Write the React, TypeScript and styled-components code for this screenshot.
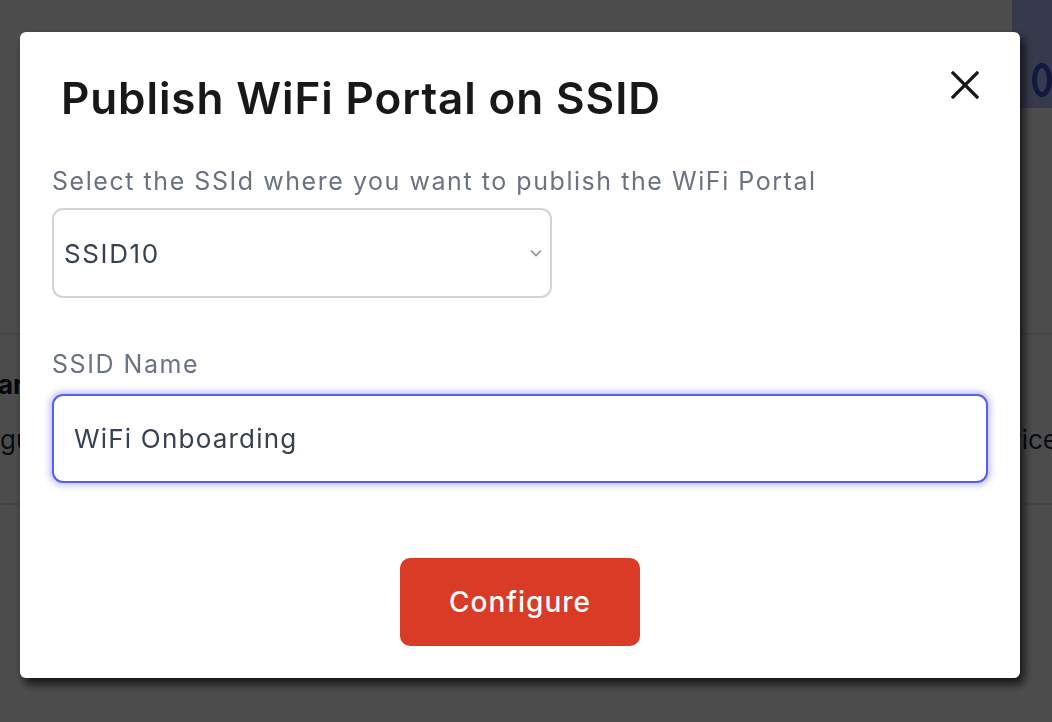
import * as React from "react";
import styled, { createGlobalStyle } from "styled-components";

const GlobalStyle = createGlobalStyle`
    html, body {
        margin: 0;
        padding: 0;
        background: #ffffff;
        overflow: hidden;
    }
    body {
        font-family: Inter, "Noto Sans", "Liberation Sans", sans-serif;
        width: 1052px;
        height: 722px;
    }
`

// page that sits behind the dialog
const Page = styled.div`
    width: 1052px;
    height: 722px;
    display: flex;
    flex-direction: column;
    overflow: hidden;
`

const TopBar = styled.div`
    height: 108px;
    display: flex;
    justify-content: flex-end;
`

const PromoCard = styled.div`
    width: 40px;
    background: #b4c2ff;
    display: flex;
    align-items: flex-end;
    padding-bottom: 11px;
    box-sizing: border-box;
`

const PromoLogo = styled.div`
    width: 34px;
    height: 34px;
    margin-left: 20px;
    border-radius: 50%;
    border: 5px solid #3a55d0;
    box-sizing: border-box;
`

const ListArea = styled.div`
    margin-top: 225px;
    border-top: 2px solid #e5e7eb;
    border-bottom: 2px solid #e5e7eb;
    height: 172px;
    padding-top: 34px;
    box-sizing: border-box;
`

const RowTitle = styled.div`
    font-size: 26px;
    font-weight: 700;
    color: #111827;
    margin-left: -2px;
`

const RowDesc = styled.div`
    display: flex;
    justify-content: space-between;
    font-size: 26px;
    color: #1f2937;
    margin-top: 24px;
    margin-right: -6px;
`

const Overlay = styled.div`
    position: fixed;
    inset: 0;
    background: rgba(0, 0, 0, 0.7);
    padding: 32px 0 0 20px;
    box-sizing: border-box;
`

const Modal = styled.div`
    width: 1000px;
    height: 646px;
    background: #ffffff;
    border-radius: 6px;
    box-shadow: 4px 6px 10px rgba(0, 0, 0, 0.75);
    padding: 40px 32px 32px 32px;
    box-sizing: border-box;
    display: flex;
    flex-direction: column;
`

const Header = styled.div`
    display: flex;
    justify-content: space-between;
    align-items: flex-start;
`

const Title = styled.h2`
    margin: 0 0 0 9px;
    font-size: 44px;
    font-weight: 600;
    line-height: 53px;
    letter-spacing: 0.9px;
    color: #18181b;
`

const CloseButton = styled.button`
    border: none;
    background: none;
    padding: 0;
    margin: -2px 8px 0 0;
    width: 30px;
    height: 30px;
    display: flex;
    align-items: center;
    justify-content: center;
    cursor: pointer;
`

const Field = styled.div<{ $top: number }>`
    margin-top: ${p => p.$top}px;
    display: flex;
    flex-direction: column;
`

const Label = styled.label<{ $gap: number }>`
    font-size: 25px;
    line-height: 29px;
    letter-spacing: 1.55px;
    color: #6b7280;
    margin-bottom: ${p => p.$gap}px;
`

const SelectWrap = styled.div`
    position: relative;
    width: 500px;
`

const Select = styled.select`
    appearance: none;
    width: 100%;
    height: 90px;
    border: 2px solid #d1d5db;
    border-radius: 11px;
    padding: 0 0 0 10px;
    font-family: inherit;
    font-size: 26px;
    letter-spacing: 1.6px;
    color: #374151;
    background: #ffffff;
    outline: none;
`

const Chevron = styled.svg`
    position: absolute;
    right: 9px;
    top: 40px;
    pointer-events: none;
`

const TextInput = styled.input`
    width: 100%;
    height: 89px;
    box-sizing: border-box;
    border: 2px solid #5b5cf6;
    border-radius: 11px;
    padding: 0 20px;
    font-family: inherit;
    font-size: 26px;
    letter-spacing: 1.2px;
    color: #374151;
    outline: none;
    box-shadow: 0 0 7px 2px rgba(99, 102, 241, 0.45);
`

const Footer = styled.div`
    margin-top: auto;
    display: flex;
    justify-content: center;
`

const PrimaryButton = styled.button`
    width: 240px;
    height: 88px;
    border: none;
    border-radius: 10px;
    background: #da3b26;
    color: #ffffff;
    font-family: inherit;
    font-size: 28px;
    font-weight: 500;
    letter-spacing: 1px;
    cursor: pointer;
`

function PublishDialog() {
    const [ssid, setSsid] = React.useState<string>("SSID10")
    const [ssidName, setSsidName] = React.useState<string>("WiFi Onboarding")
    return (
        <Modal>
            <Header>
                <Title>Publish WiFi Portal on SSID</Title>
                <CloseButton aria-label="Close">
                    <svg width="28" height="28" viewBox="0 0 28 28">
                        <path d="M2 2 L26 26 M26 2 L2 26" stroke="#18181b" strokeWidth="3.2" strokeLinecap="square"/>
                    </svg>
                </CloseButton>
            </Header>
            <Field $top={42}>
                <Label $gap={12}>Select the SSId where you want to publish the WiFi Portal</Label>
                <SelectWrap>
                    <Select value={ssid} onChange={(ev: React.ChangeEvent<HTMLSelectElement>): void => setSsid(ev.target.value)}>
                        <option value="SSID10">SSID10</option>
                        <option value="SSID11">SSID11</option>
                        <option value="SSID12">SSID12</option>
                    </Select>
                    <Chevron width="14" height="10" viewBox="0 0 14 10">
                        <path d="M2 2.5 L7 7.5 L12 2.5" fill="none" stroke="#8b8f97" strokeWidth="1.6"/>
                    </Chevron>
                </SelectWrap>
            </Field>
            <Field $top={52}>
                <Label $gap={15}>SSID Name</Label>
                <TextInput value={ssidName} onChange={(ev: React.ChangeEvent<HTMLInputElement>): void => setSsidName(ev.target.value)}/>
            </Field>
            <Footer>
                <PrimaryButton>Configure</PrimaryButton>
            </Footer>
        </Modal>
    )
}

function App() {
    return (
        <>
            <GlobalStyle/>
            <Page>
                <TopBar>
                    <PromoCard><PromoLogo/></PromoCard>
                </TopBar>
                <ListArea>
                    <RowTitle>arrival portal</RowTitle>
                    <RowDesc>
                        <span>guest onboarding</span>
                        <span>device</span>
                    </RowDesc>
                </ListArea>
            </Page>
            <Overlay>
                <PublishDialog/>
            </Overlay>
        </>
    )
}

export default App;
